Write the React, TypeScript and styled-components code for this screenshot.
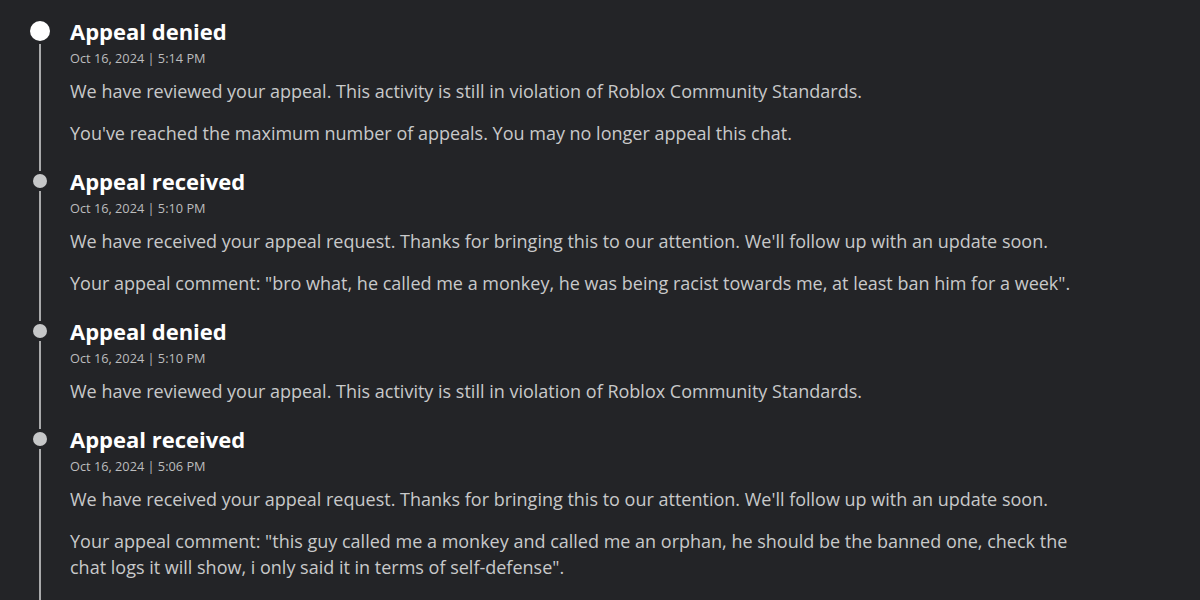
import styled, { createGlobalStyle } from "styled-components"

type Entry = {
  title: string
  date: string
  paragraphs: string[]
  current?: boolean
}

const entries: Entry[] = [
  {
    title: "Appeal denied",
    date: "Oct 16, 2024 | 5:14 PM",
    current: true,
    paragraphs: [
      "We have reviewed your appeal. This activity is still in violation of Roblox Community Standards.",
      "You've reached the maximum number of appeals. You may no longer appeal this chat.",
    ],
  },
  {
    title: "Appeal received",
    date: "Oct 16, 2024 | 5:10 PM",
    paragraphs: [
      "We have received your appeal request. Thanks for bringing this to our attention. We'll follow up with an update soon.",
      'Your appeal comment: "bro what, he called me a monkey, he was being racist towards me, at least ban him for a week".',
    ],
  },
  {
    title: "Appeal denied",
    date: "Oct 16, 2024 | 5:10 PM",
    paragraphs: [
      "We have reviewed your appeal. This activity is still in violation of Roblox Community Standards.",
    ],
  },
  {
    title: "Appeal received",
    date: "Oct 16, 2024 | 5:06 PM",
    paragraphs: [
      "We have received your appeal request. Thanks for bringing this to our attention. We'll follow up with an update soon.",
      'Your appeal comment: "this guy called me a monkey and called me an orphan, he should be the banned one, check the chat logs it will show, i only said it in terms of self-defense".',
    ],
  },
]

export default function App() {
  return (
    <>
      <GlobalStyle />
      <Timeline>
        {entries.map((entry, i) => (
          <Item key={i}>
            <Rail>
              <Dot $current={entry.current} />
              <Line />
            </Rail>
            <Content>
              <Title>{entry.title}</Title>
              <DateText>{entry.date}</DateText>
              {entry.paragraphs.map((p, j) => (
                <Body key={j}>{p}</Body>
              ))}
            </Content>
          </Item>
        ))}
      </Timeline>
    </>
  )
}

const GlobalStyle = createGlobalStyle`
  html, body {
    margin: 0;
    padding: 0;
    background: #232427;
    overflow: hidden;
  }
  body {
    font-family: "Open Sans", "Noto Sans", sans-serif;
  }
`

const Timeline = styled.div`
  display: flex;
  flex-direction: column;
  height: 600px;
  padding: 21px 0 0 30px;
  box-sizing: border-box;
  background: #232427;
`

const Item = styled.div`
  display: grid;
  grid-template-columns: 20px 1020px;
  column-gap: 20px;

  &:last-child {
    flex: 1;
  }
`

const Rail = styled.div`
  display: flex;
  flex-direction: column;
  align-items: center;
`

const Dot = styled.div<{ $current?: boolean }>`
  flex: none;
  width: ${(p) => (p.$current ? "20px" : "14px")};
  height: ${(p) => (p.$current ? "20px" : "14px")};
  margin-top: ${(p) => (p.$current ? "0" : "3px")};
  border-radius: 50%;
  background: ${(p) => (p.$current ? "#ffffff" : "#c6c7c8")};
`

const Line = styled.div`
  flex: 1;
  width: 2px;
  margin-top: 3px;
  background: #a9aaab;
`

const Content = styled.div`
  padding-bottom: 25px;
`

const Title = styled.div`
  font-size: 22px;
  line-height: 20px;
  font-weight: 700;
  color: #ffffff;
`

const DateText = styled.div`
  margin-top: 7px;
  font-size: 12.75px;
  line-height: 20px;
  color: #bcbdbe;
`

const Body = styled.p`
  margin: 16px 0 0;
  font-size: 18px;
  line-height: 26px;
  color: #c8c9ca;

  &:first-of-type {
    margin-top: 10px;
  }
`
